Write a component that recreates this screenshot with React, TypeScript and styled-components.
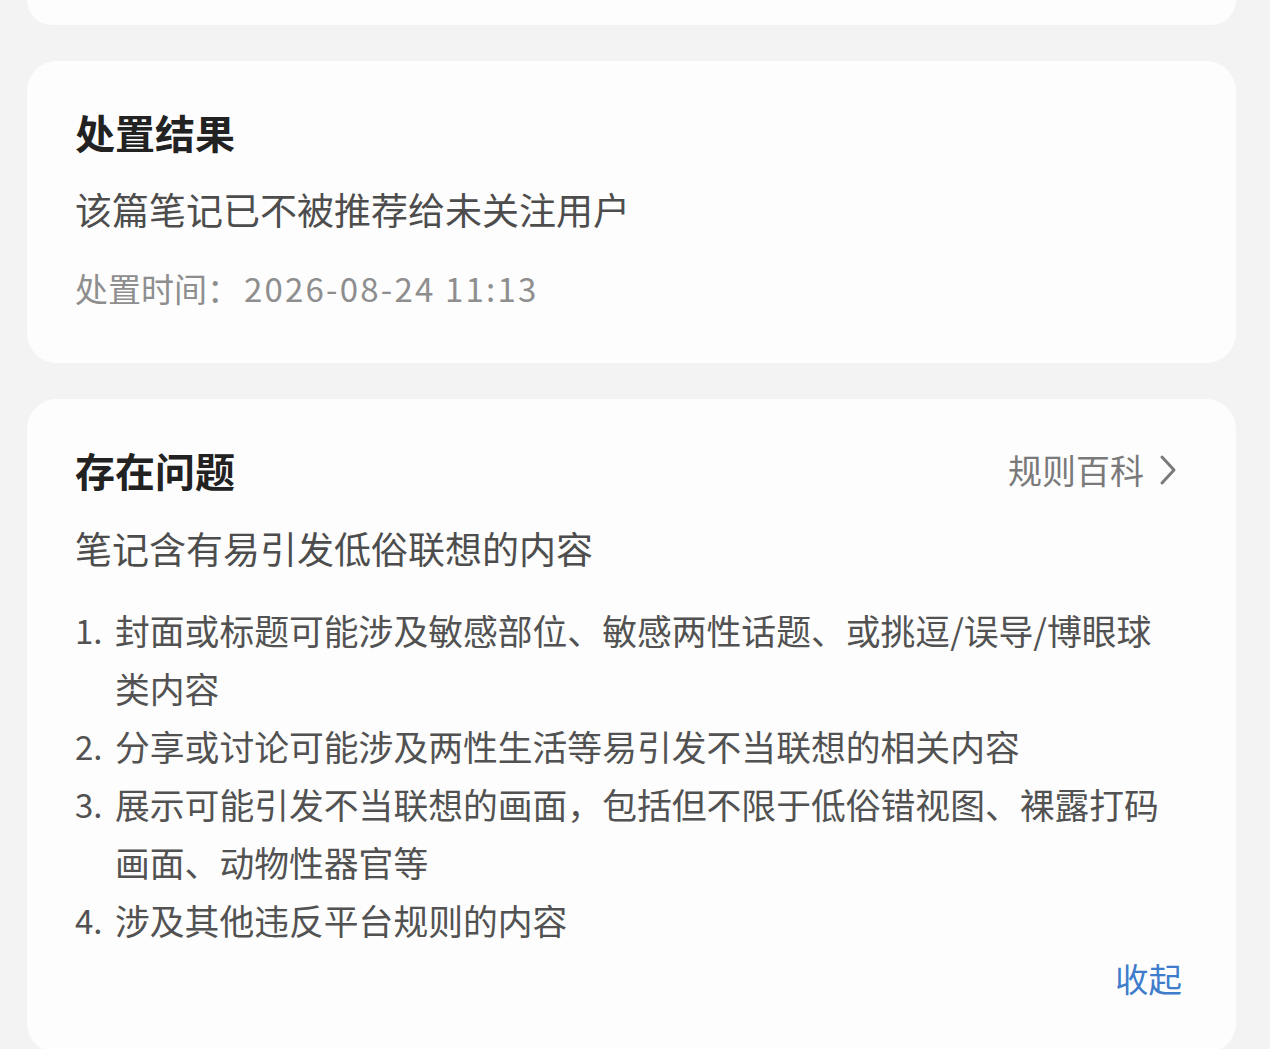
import React from "react";
import styled, { createGlobalStyle } from "styled-components";

const GlobalStyle = createGlobalStyle`
  html, body {
    margin: 0;
    padding: 0;
    background: #f3f3f3;
  }
  body {
    font-family: "Noto Sans CJK SC", "Noto Sans", sans-serif;
    -webkit-font-smoothing: antialiased;
  }
`;

const Page = styled.div`
  display: flex;
  flex-direction: column;
  gap: 36px;
  padding: 0 34px 0 27px;
  height: 1049px;
  overflow: hidden;
  background: #f3f3f3;
`;

const Card = styled.section<{ $tail?: boolean }>`
  background: #fdfdfd;
  border-radius: ${(p) => (p.$tail ? "0 0 30px 30px" : "30px")};
  padding: ${(p) => (p.$tail ? "0" : "43px 58px 46px 48px")};
  height: ${(p) => (p.$tail ? "25px" : "auto")};
  flex-shrink: 0;
  display: flex;
  flex-direction: column;
`;

const HeaderRow = styled.div`
  display: flex;
  align-items: center;
  justify-content: space-between;
`;

const Title = styled.h2`
  margin: 0;
  font-size: 40px;
  line-height: 56px;
  font-weight: 700;
  color: #222222;
`;

const RuleLink = styled.a`
  display: flex;
  align-items: center;
  gap: 14px;
  font-size: 34px;
  line-height: 56px;
  color: #7a7a7a;
  text-decoration: none;
`;

const Summary = styled.p<{ $gap: number }>`
  margin: ${(p) => p.$gap}px 0 0;
  font-size: 37px;
  line-height: 58px;
  color: #4d4d4d;
`;

const Meta = styled.p`
  margin: 21px 0 0;
  font-size: 33px;
  line-height: 58px;
  color: #8e8e8e;
`;

const Stamp = styled.span`
  margin-left: 4px;
  letter-spacing: 2.2px;
`;

const List = styled.ol`
  margin: 24px 0 0;
  padding: 0;
  list-style: none;
  display: flex;
  flex-direction: column;
`;

const Item = styled.li`
  display: grid;
  grid-template-columns: 40px 1fr;
  font-size: 34.8px;
  line-height: 58px;
  color: #525252;
`;

const Num = styled.span`
  font-size: 33px;
`;

const Footer = styled.div`
  display: flex;
  justify-content: flex-end;
`;

const Collapse = styled.button`
  border: none;
  background: none;
  padding: 0;
  margin-right: -4px;
  font-family: inherit;
  font-size: 33.5px;
  line-height: 58px;
  color: #3f7dcc;
  cursor: pointer;
`;

const Chevron = () => (
  <svg width="20" height="34" viewBox="0 0 20 34" fill="none">
    <path d="M4 4 L16 17 L4 30" stroke="#7a7a7a" strokeWidth="3" strokeLinecap="round" strokeLinejoin="round" />
  </svg>
);

const issues = [
  "封面或标题可能涉及敏感部位、敏感两性话题、或挑逗/误导/博眼球类内容",
  "分享或讨论可能涉及两性生活等易引发不当联想的相关内容",
  "展示可能引发不当联想的画面，包括但不限于低俗错视图、裸露打码画面、动物性器官等",
  "涉及其他违反平台规则的内容",
];

export default function App() {
  return (
    <>
      <GlobalStyle />
      <Page>
        <Card $tail />
        <Card>
          <Title>处置结果</Title>
          <Summary $gap={20}>该篇笔记已不被推荐给未关注用户</Summary>
          <Meta>
            处置时间：<Stamp>2026-08-24 11:13</Stamp>
          </Meta>
        </Card>
        <Card>
          <HeaderRow>
            <Title>存在问题</Title>
            <RuleLink href="#">
              规则百科
              <Chevron />
            </RuleLink>
          </HeaderRow>
          <Summary $gap={21}>笔记含有易引发低俗联想的内容</Summary>
          <List>
            {issues.map((t, i) => (
              <Item key={i}>
                <Num>{i + 1}.</Num>
                <span>{t}</span>
              </Item>
            ))}
          </List>
          <Footer>
            <Collapse>收起</Collapse>
          </Footer>
        </Card>
      </Page>
    </>
  );
}
